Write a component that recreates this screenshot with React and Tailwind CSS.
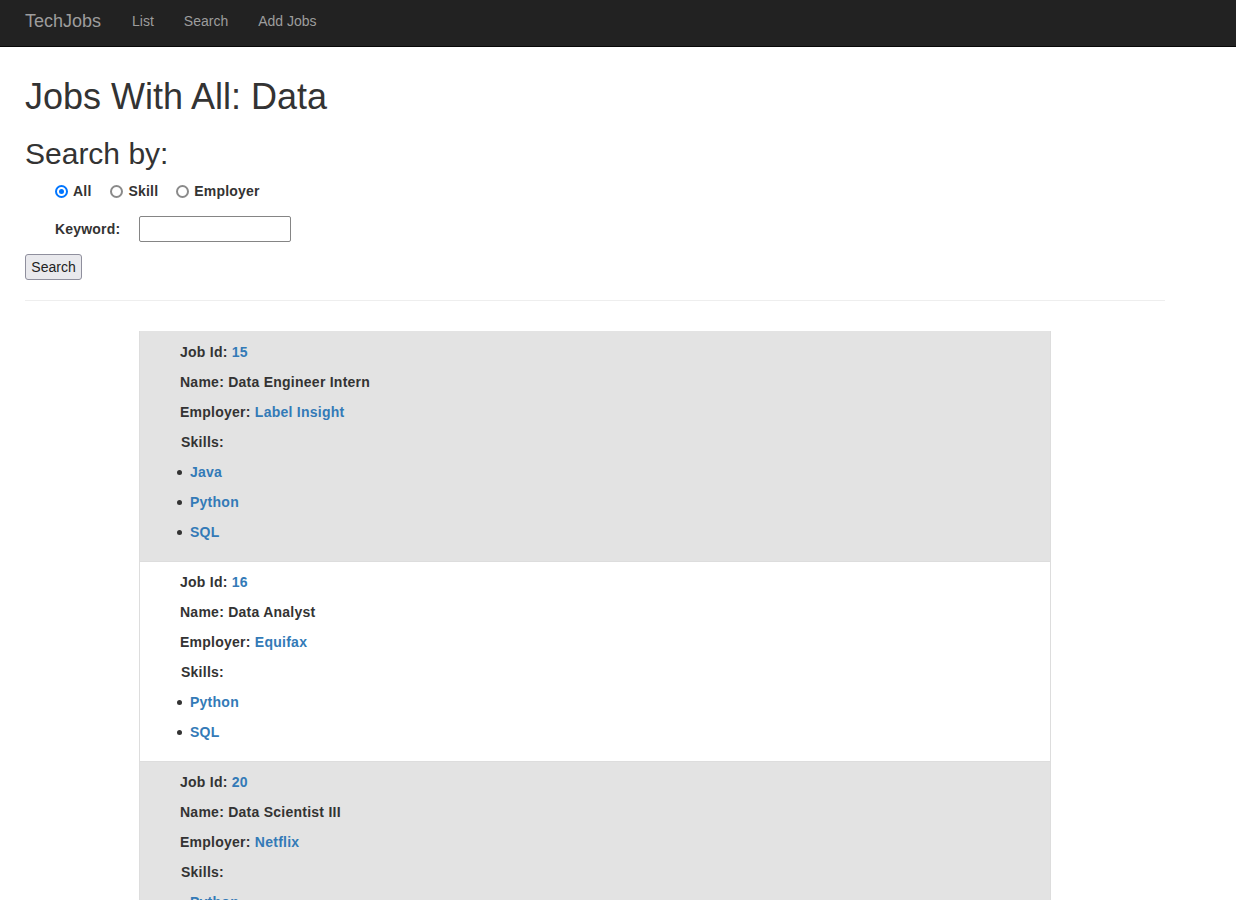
import React from "react";

const jobs = [
  { id: 15, name: "Data Engineer Intern", employer: "Label Insight", skills: ["Java", "Python", "SQL"] },
  { id: 16, name: "Data Analyst", employer: "Equifax", skills: ["Python", "SQL"] },
  { id: 20, name: "Data Scientist III", employer: "Netflix", skills: ["Python", "SQL"] },
];

function Line({ children }) {
  return <div className="h-[20px] leading-[20px] flex items-center">{children}</div>;
}

function Radio({ checked }) {
  return checked ? (
    <span className="w-[13px] h-[13px] rounded-full border-2 border-[#0075ff] flex items-center justify-center bg-white">
      <span className="w-[5px] h-[5px] rounded-full bg-[#0075ff]" />
    </span>
  ) : (
    <span className="w-[13px] h-[13px] rounded-full border-2 border-[#8a8a8a] bg-white" />
  );
}

export default function App() {
  return (
    <div className="min-h-[900px] bg-white text-[#333] font-['Liberation_Sans',Arial,sans-serif] text-[14px]">
      <nav className="h-[47px] bg-[#222] border-b border-[#080808] flex items-center pb-[3px] px-[25px]">
        <span className="text-[18px] text-[#9d9d9d] mr-[31px]">TechJobs</span>
        <span className="text-[#9d9d9d] mr-[30px]">List</span>
        <span className="text-[#9d9d9d] mr-[30px]">Search</span>
        <span className="text-[#9d9d9d]">Add Jobs</span>
      </nav>
      <div className="px-[25px] w-[1190px]">
        <h1 className="mt-[30px] text-[36px] leading-[40px]">Jobs With All: Data</h1>
        <h2 className="mt-[20px] text-[30px] leading-[33px]">Search by:</h2>
        <div className="mt-[11px] pl-[30px] h-[20px] flex items-center font-bold tracking-[0.2px]">
          <label className="flex items-center">
            <Radio checked />
            <span className="ml-[5px]">All</span>
          </label>
          <label className="flex items-center ml-[18px]">
            <Radio />
            <span className="ml-[6px]">Skill</span>
          </label>
          <label className="flex items-center ml-[18px]">
            <Radio />
            <span className="ml-[5px]">Employer</span>
          </label>
        </div>
        <div className="mt-[15px] pl-[30px] flex items-center">
          <span className="font-bold w-[84px] tracking-[0.2px]">Keyword:</span>
          <input type="text" className="w-[152px] h-[26px] border border-[#858585] rounded-[2px] px-[2px]" />
        </div>
        <button className="mt-[12px] h-[26px] w-[57px] bg-[#e9e9ed] border border-[#8f8f9d] rounded-[3px] text-[14px] text-[#222] flex items-center justify-center">
          Search
        </button>
        <hr className="mt-[20px] w-[1140px] border-0 border-t border-[#eee]" />
        <div className="mt-[30px] w-[912px] border-x border-[#ddd] ml-[114px] font-bold tracking-[0.25px]">
          {jobs.map((j, i) => (
            <div
              key={j.id}
              className={`pl-[40px] ${i % 2 === 0 ? "bg-[#e3e3e3]" : "bg-white"} ${i === 0 ? "pt-[11px]" : "border-t border-[#ddd] pt-[10px]"} pb-[19px] flex flex-col gap-[10px]`}
            >
              <Line>
                Job Id:&nbsp;<span className="text-[#337ab7]">{j.id}</span>
              </Line>
              <Line>Name: {j.name}</Line>
              <Line>
                Employer:&nbsp;<span className="text-[#337ab7]">{j.employer}</span>
              </Line>
              <Line>
                <span className="ml-[1px]">Skills:</span>
              </Line>
              {j.skills.map((s) => (
                <Line key={s}>
                  <span className="w-[5px] h-[5px] rounded-full bg-[#333] ml-[-3px] mr-[8px]" />
                  <span className="text-[#337ab7]">{s}</span>
                </Line>
              ))}
            </div>
          ))}
        </div>
      </div>
    </div>
  );
}
